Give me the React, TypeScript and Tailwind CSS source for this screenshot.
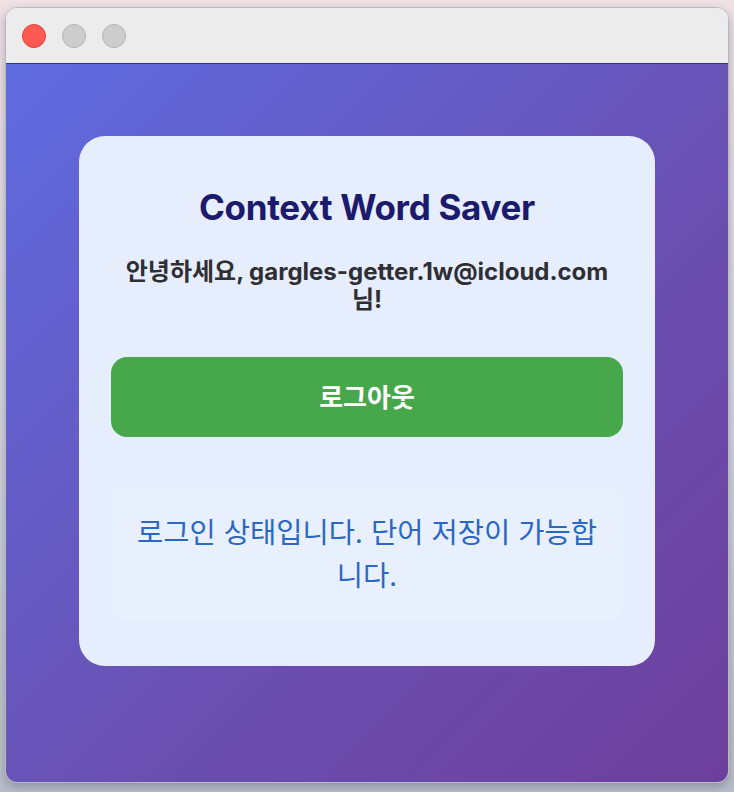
export default function App() {
  return (
    <div className="w-[734px] h-[792px] bg-gradient-to-b from-[#f0e1e5] via-[#d4d7e2] to-[#b9bdc9] pt-[7px] px-[5px] pb-[9px] font-['Inter','Noto_Sans_CJK_KR',sans-serif]">
      <div className="h-full flex flex-col rounded-[12px] overflow-hidden border border-[#b9b9c2] shadow-[0_4px_10px_rgba(60,60,80,0.35)]">
        {/* Title bar */}
        <div className="h-[56px] shrink-0 bg-[#ececec] border-b border-[#33338a] flex items-center gap-4 pl-[16px]">
          <span className="w-6 h-6 rounded-full bg-[#fe5a54] border border-[#e0443e]" />
          <span className="w-6 h-6 rounded-full bg-[#cdcdcd] border border-[#b4b4b4]" />
          <span className="w-6 h-6 rounded-full bg-[#cdcdcd] border border-[#b4b4b4]" />
        </div>

        {/* Popup body */}
        <div className="flex-1 bg-[linear-gradient(135deg,#5f6be0_0%,#6a4fb0_60%,#6d3f9c_100%)] pt-[72px] flex justify-center">
          <div className="w-[576px] h-[530px] rounded-[26px] bg-[#e6edfc] px-8 pt-[49px] flex flex-col items-center">
            <h1 className="text-[35px] leading-[44px] font-bold text-[#1b1a6b] tracking-[-0.3px]">
              Context Word Saver
            </h1>
            <p className="mt-[29px] text-[24px] leading-[28px] font-bold text-[#2e2e33] text-center">
              안녕하세요, gargles-getter.1w@icloud.com 님!
            </p>
            <button className="mt-[43px] w-full h-[80px] rounded-[16px] bg-[#47a84b] text-white text-[26px] font-bold">
              로그아웃
            </button>
            <div className="mt-[50px] w-full h-[133px] rounded-[16px] bg-[#e9f0fd] px-5 flex items-center justify-center">
              <p className="text-[28.5px] leading-[43px] text-[#2a68c3] text-center">
                로그인 상태입니다. 단어 저장이 가능합니다.
              </p>
            </div>
          </div>
        </div>
      </div>
    </div>
  );
}
